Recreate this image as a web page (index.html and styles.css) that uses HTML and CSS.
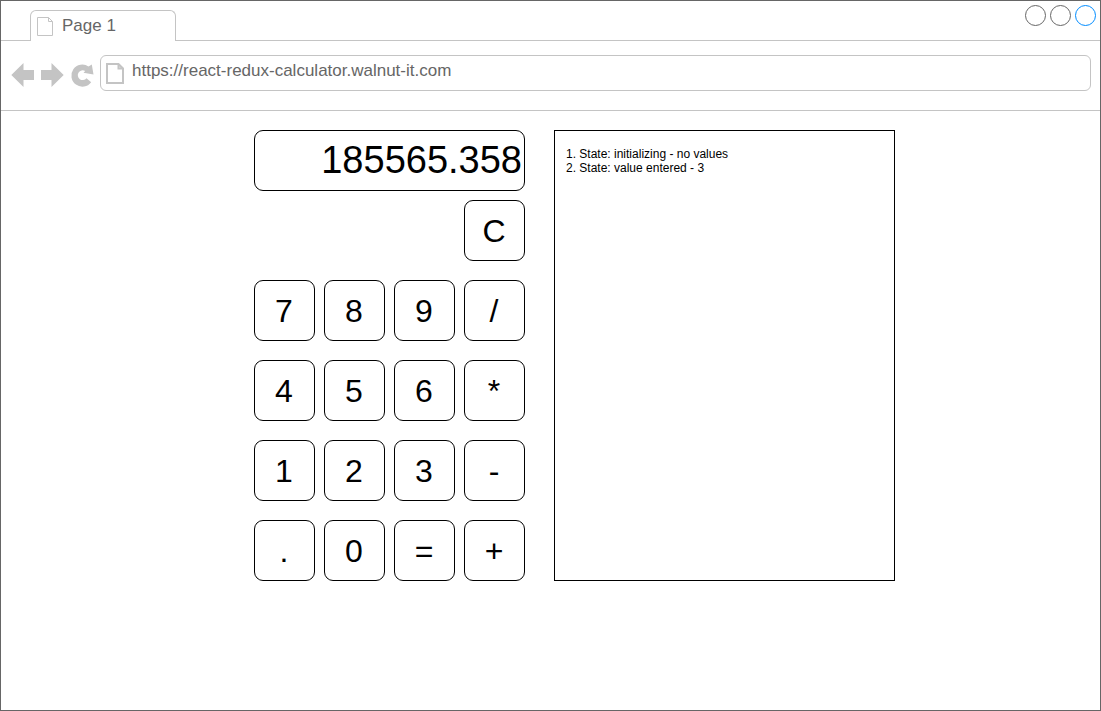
FILE: index.html
```html
<!DOCTYPE html>
<html lang="en">
<head>
<meta charset="utf-8">
<meta name="viewport" content="width=device-width, initial-scale=1">
<title>Calculator</title>
<link rel="stylesheet" href="styles.css">
</head>
<body>
<div class="window">
  <header class="tab-strip">
    <button class="tab" type="button">
      <svg class="tab-icon" width="17" height="20" viewBox="0 0 17 20" aria-hidden="true"><path d="M.5.5H11.500L15.500 4.500V18.500H.5ZM11.500 .5V4.500H15.500" fill="none" stroke="#c4c4c4"/></svg>
      <span>Page 1</span>
    </button>
    <div class="window-controls">
      <button class="dot" type="button" aria-label="Minimize"></button>
      <button class="dot" type="button" aria-label="Maximize"></button>
      <button class="dot dot-close" type="button" aria-label="Close"></button>
    </div>
  </header>
  <nav class="toolbar">
    <button class="nav-button" type="button" aria-label="Back"><svg width="23" height="24" viewBox="0 0 23 24"><path d="M.3 12 12.500 0V7H23V17H12.500V24Z" fill="#c4c4c4"/></svg></button>
    <button class="nav-button" type="button" aria-label="Forward"><svg width="23" height="24" viewBox="0 0 23 24"><path d="M22.700 12 10.500 0V7H0V17H10.500V24Z" fill="#c4c4c4"/></svg></button>
    <button class="nav-button" type="button" aria-label="Reload"><svg class="reload-icon" width="22" height="24" viewBox="0 0 22 24"><path d="M17.500 3.500 20.800 1.500 22.500 11.500 12.500 9.700 14.200 8A4.900 4.900 0 1 0 15.500 15.300L20.200 19.200A11 11 0 1 1 17.500 3.500Z" fill="#c4c4c4"/></svg></button>
    <div class="address">
      <svg width="18" height="21" viewBox="0 0 18 21" aria-hidden="true"><path d="M1 1H12.500L17 5.500V20H1ZM12.500 1V5.500H17" fill="none" stroke="#c4c4c4" stroke-width="2"/></svg>
      <input class="address-input" type="text" aria-label="Address" value="https://react-redux-calculator.walnut-it.com">
    </div>
  </nav>
  <main class="page">
    <section class="calculator" aria-label="Calculator">
      <output class="display">185565.358</output>
      <div class="clear-row"><button class="key" type="button">C</button></div>
      <div class="keys">
        <button class="key" type="button">7</button>
        <button class="key" type="button">8</button>
        <button class="key" type="button">9</button>
        <button class="key" type="button">/</button>
        <button class="key" type="button">4</button>
        <button class="key" type="button">5</button>
        <button class="key" type="button">6</button>
        <button class="key" type="button">*</button>
        <button class="key" type="button">1</button>
        <button class="key" type="button">2</button>
        <button class="key" type="button">3</button>
        <button class="key" type="button">-</button>
        <button class="key" type="button">.</button>
        <button class="key" type="button">0</button>
        <button class="key" type="button">=</button>
        <button class="key" type="button">+</button>
      </div>
    </section>
    <section class="history" aria-label="State history">
      <p>1. State: initializing - no values</p>
      <p>2. State: value entered - 3</p>
    </section>
  </main>
</div>
</body>
</html>
```
FILE: styles.css
```css
* {
  box-sizing: border-box;
}

body {
  margin: 0;
  background: #fff;
  color: #000;
  font-family: "Liberation Sans", Arial, sans-serif;
}

button,
input {
  font-family: inherit;
  color: inherit;
  background: none;
  border: 0;
  margin: 0;
  padding: 0;
}

svg {
  display: block;
  flex: none;
}

.window {
  min-height: 100vh;
  border: 1px solid #666;
}

.tab-strip {
  display: flex;
  justify-content: space-between;
  align-items: flex-start;
  padding: 9px 4px 0 29px;
  border-bottom: 1px solid #c4c4c4;
}

.tab {
  display: flex;
  align-items: center;
  gap: 8px;
  width: 146px;
  height: 31px;
  margin-bottom: -1px;
  padding: 0 6px;
  border: 1px solid #c4c4c4;
  border-bottom: 0;
  border-radius: 6px 6px 0 0;
  background: #fff;
  color: #666;
  font-size: 17px;
}

.tab-icon {
  margin-top: 2px;
}

.window-controls {
  display: flex;
  gap: 4px;
  margin-top: -5px;
}

.dot {
  width: 21px;
  height: 21px;
  border: 1px solid #666;
  border-radius: 50%;
}

.dot-close {
  border-color: #008cff;
}

.toolbar {
  display: flex;
  align-items: center;
  gap: 7px;
  padding: 14px 9px 19px 10px;
  border-bottom: 1px solid #c4c4c4;
}

.nav-button {
  padding-top: 3px;
}

.reload-icon {
  overflow: visible;
}

.address {
  display: flex;
  flex: 1;
  align-items: center;
  gap: 8px;
  height: 36px;
  padding-left: 5px;
  border: 1px solid #c4c4c4;
  border-radius: 6px;
}

.address-input {
  flex: 1;
  min-width: 0;
  height: 34px;
  padding-bottom: 4px;
  color: #666;
  font-size: 17px;
  outline: 0;
}

.page {
  display: flex;
  flex-wrap: wrap;
  justify-content: center;
  gap: 29px;
  padding: 19px 0 19px 48px;
}

.calculator {
  width: 271px;
}

.display {
  display: block;
  height: 61px;
  padding-right: 2px;
  border: 1px solid #000;
  border-radius: 9px;
  font-size: 38px;
  line-height: 59px;
  text-align: right;
}

.clear-row {
  display: flex;
  justify-content: flex-end;
  margin: 9px 0 19px;
}

.keys {
  display: grid;
  grid-template-columns: repeat(4, 61px);
  gap: 19px 9px;
}

.key {
  width: 61px;
  height: 61px;
  padding: 1px 1px 0 0;
  border: 1px solid #000;
  border-radius: 9px;
  font-size: 32px;
}

.history {
  width: 341px;
  padding: 16px 11px;
  border: 1px solid #000;
  font-size: 12px;
  line-height: 14px;
}

.history p {
  margin: 0;
}
```
